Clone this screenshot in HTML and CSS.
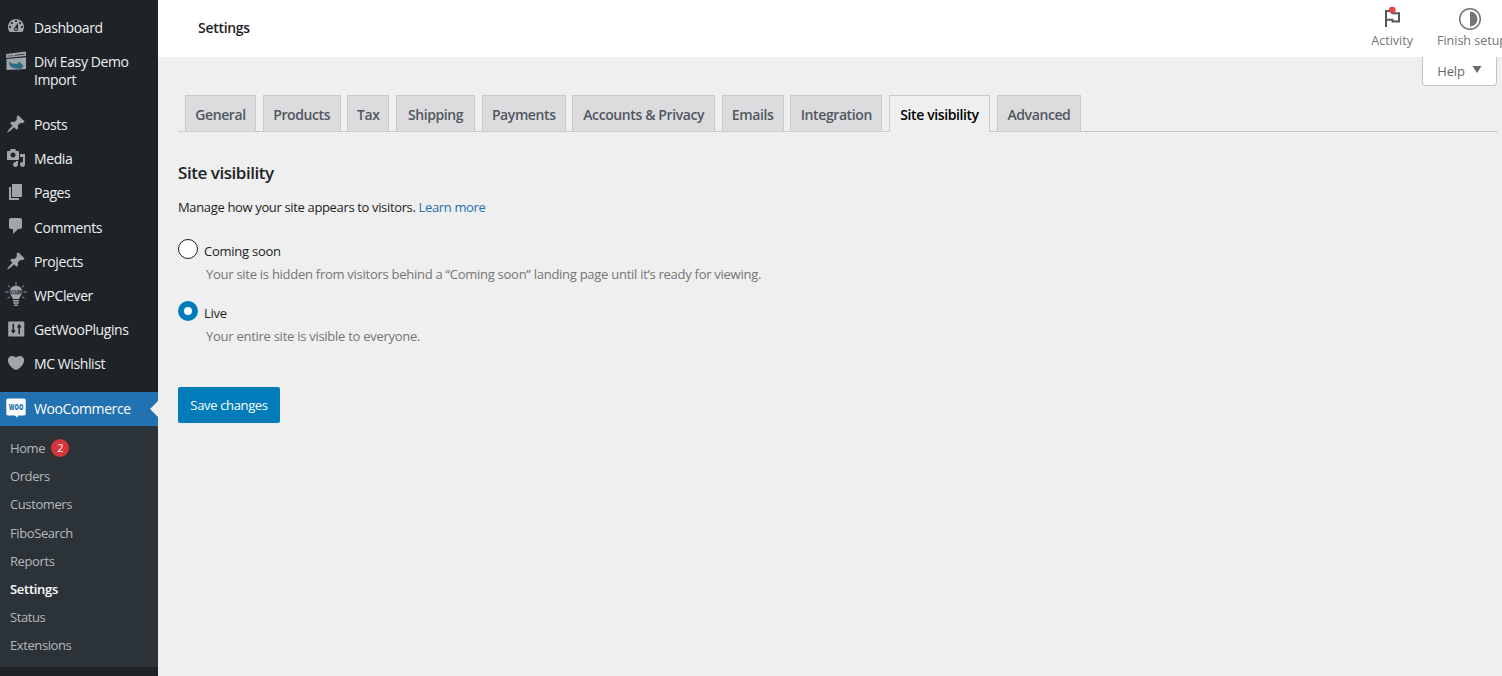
FILE: index.html
```html
<!DOCTYPE html>
<html lang="en">
<head>
  <meta charset="UTF-8">
  <meta name="viewport" content="width=device-width, initial-scale=1.0">
  <title>WooCommerce settings</title>
  <link rel="stylesheet" href="styles.css">
</head>
<body>
  <div class="container">
    <div class="sidebar">
      <ul class="menu">
        <li>
          <svg class="icon" viewBox="0 0 20 20"><path d="M3.76 16h12.48c1.1-1.37 1.76-3.11 1.76-5 0-4.42-3.58-8-8-8s-8 3.58-8 8c0 1.89.66 3.63 1.76 5zM10 4c.55 0 1 .45 1 1s-.45 1-1 1-1-.45-1-1 .45-1 1-1zM6 6c.55 0 1 .45 1 1s-.45 1-1 1-1-.45-1-1 .45-1 1-1zm8 0c.55 0 1 .45 1 1s-.45 1-1 1-1-.45-1-1 .45-1 1-1zm-5.37 5.55L12 7v6c0 1.1-.9 2-2 2s-2-.9-2-2c0-.57.24-1.08.63-1.45zM4 10c.55 0 1 .45 1 1s-.45 1-1 1-1-.45-1-1 .45-1 1-1zm12 0c.55 0 1 .45 1 1s-.45 1-1 1-1-.45-1-1 .45-1 1-1zm-5 3c0-.55-.45-1-1-1s-1 .45-1 1 .45 1 1 1 1-.45 1-1z"/></svg>
          <span>Dashboard</span>
        </li>
        <li>
          <svg class="icon" viewBox="0 0 20 20"><path d="M0 3l20-2.500V5L0 7z"/><path d="M.5 8L20 6.200V18l-19.500 1z"/><path class="hole" d="M1.500 4.600l1-.1v1l-1 .1zM3.600 4.400l1-.1v1l-1 .1zM5.700 4.200l1-.1v1l-1 .1zM8.500 4l10-1.200v.8l-10 1.200z"/><path class="arrow" d="M3 10c.8 2.500 3.500 3.300 9.500 2.500V10l5.300 5-5.300 5v-2.700C7 18 2.500 16 3 10z"/></svg>
          <span>Divi Easy Demo Import</span>
        </li>
        <li class="separator"></li>
        <li>
          <svg class="icon" viewBox="0 0 20 20"><path d="M10.440 3.020l1.820-1.820 6.360 6.350-1.830 1.820c-1.050-.68-2.480-.57-3.410.36l-.75.75c-.92.93-1.040 2.350-.35 3.410l-1.830 1.820-2.410-2.410-2.800 2.790c-.42.42-3.380 2.710-3.800 2.290s1.860-3.390 2.280-3.810l2.790-2.790L4.100 9.360l1.830-1.820c1.050.69 2.480.57 3.400-.36l.75-.75c.93-.92 1.050-2.350.36-3.410z"/></svg>
          <span>Posts</span>
        </li>
        <li>
          <svg class="icon" viewBox="0 0 20 20"><path d="M13 11V4c0-.55-.45-1-1-1h-1.670L9 1H5L3.670 3H2c-.55 0-1 .45-1 1v7c0 .55.45 1 1 1h10c.55 0 1-.45 1-1zM7 4.500c1.380 0 2.500 1.120 2.500 2.500S8.380 9.500 7 9.500 4.500 8.380 4.500 7 5.620 4.500 7 4.500zM14 6h5v10.500c0 1.380-1.120 2.500-2.500 2.500S14 17.880 14 16.500s1.120-2.500 2.500-2.500c.17 0 .34.02.5.05V9h-3V6zm-4 8.050V13h2v3.500c0 1.380-1.120 2.500-2.500 2.500S7 17.880 7 16.500 8.120 14 9.500 14c.17 0 .34.02.5.05z"/></svg>
          <span>Media</span>
        </li>
        <li>
          <svg class="icon" viewBox="0 0 20 20"><path d="M6 15V2h10v13H6zm-1 1h8v2H3V5h2v11z"/></svg>
          <span>Pages</span>
        </li>
        <li>
          <svg class="icon" viewBox="0 0 20 20"><path d="M5 2h9c1.100 0 2 .9 2 2v7c0 1.100-.9 2-2 2h-2l-5 5v-5H5c-1.100 0-2-.9-2-2V4c0-1.100.9-2 2-2z"/></svg>
          <span>Comments</span>
        </li>
        <li>
          <svg class="icon" viewBox="0 0 20 20"><path d="M10.440 3.020l1.820-1.820 6.360 6.350-1.830 1.820c-1.050-.68-2.480-.57-3.410.36l-.75.75c-.92.93-1.040 2.350-.35 3.410l-1.830 1.820-2.410-2.410-2.800 2.790c-.42.42-3.380 2.710-3.800 2.290s1.860-3.390 2.280-3.810l2.790-2.790L4.100 9.360l1.830-1.820c1.050.69 2.480.57 3.400-.36l.75-.75c.93-.92 1.050-2.350.36-3.410z"/></svg>
          <span>Projects</span>
        </li>
        <li>
          <svg class="icon" viewBox="0 0 20 20">
            <path class="ray" d="M10-3v3M1.800 0l2.200 2.700M18.200 0L16 2.700M-1 7h3.500M17.500 7H21M1.500 13.500L4 11.800M18.500 13.500L16 11.800"/>
            <path d="M10 .8c-3.600 0-6.300 2.700-6.300 6 0 3 2.600 4.500 3 7.200h6.600c.4-2.700 3-4.200 3-7.200 0-3.300-2.700-6-6.300-6z"/>
            <path d="M7 15h6v1.500H7zM7.300 17.300h5.400v1.500H7.300zM8.300 19.600h3.400v1.400H8.300z"/>
            <rect class="hole" x="4.500" y="5" width="11" height="4.200"/>
            <text class="bulb-text" x="10" y="8.700">WPC</text>
          </svg>
          <span>WPClever</span>
        </li>
        <li>
          <svg class="icon" viewBox="0 0 20 20"><path d="M3 2.500h14.500a.8.8 0 0 1 .8.8v13.500a.8.8 0 0 1-.8.8H3a.8.8 0 0 1-.8-.8V3.300a.8.8 0 0 1 .8-.8z"/><path class="knob" d="M7.300 4.800v8M13.200 15.300V7"/><path class="hole" d="M4.800 11.200h5L7.300 14.800zM10.700 8.500h5L13.200 4.800z"/></svg>
          <span>GetWooPlugins</span>
        </li>
        <li>
          <svg class="icon" viewBox="0 0 20 20"><path d="M10 17.120c3.330-1.400 5.740-3.790 7.040-6.210 1.280-2.410 1.460-4.810.32-6.250-1.030-1.290-2.370-1.780-3.730-1.740s-2.680.63-3.630 1.460c-.95-.83-2.270-1.420-3.630-1.460s-2.700.45-3.730 1.740c-1.140 1.440-.96 3.840.34 6.250 1.280 2.420 3.690 4.810 7.020 6.210z"/></svg>
          <span>MC Wishlist</span>
        </li>
        <li class="separator"></li>
        <li class="current">
          <svg class="icon" viewBox="0 0 20 20"><path d="M2 .6h16a1.700 1.700 0 0 1 1.700 1.700v13.400a1.700 1.700 0 0 1-1.700 1.700h-5.500L11.300 19.500 8.800 17.400H2A1.700 1.700 0 0 1 .3 15.700V2.300A1.700 1.700 0 0 1 2 .6z"/><text class="woo-text" x="2.800" y="11.500" textLength="14.500" lengthAdjust="spacingAndGlyphs">WOO</text></svg>
          <span>WooCommerce</span>
        </li>
      </ul>
      <ul class="submenu">
        <li>Home <span class="badge">2</span></li>
        <li>Orders</li>
        <li>Customers</li>
        <li>FiboSearch</li>
        <li>Reports</li>
        <li class="active">Settings</li>
        <li>Status</li>
        <li>Extensions</li>
      </ul>
    </div>
    <div class="main-content">
      <div class="header">
        <h1>Settings</h1>
        <div class="activity">
          <button class="panel-tab">
            <svg width="24" height="24" viewBox="0 0 24 24"><path class="flag" d="M6 20V4h6.300v2.300H19v8.200h-6.500v-1.700H6"/><circle class="dot" cx="12.300" cy="3.100" r="3.300"/></svg>
            <span>Activity</span>
          </button>
          <button class="panel-tab setup">
            <svg width="24" height="24" viewBox="0 0 24 24"><circle class="ring" cx="12" cy="12" r="10.300"/><path class="half" d="M12 4.500a7.500 7.500 0 0 1 0 15z"/></svg>
            <span>Finish setup</span>
          </button>
        </div>
      </div>
      <div class="help-row"><button class="help">Help <svg width="10" height="8" viewBox="0 0 10 8"><path d="M.5 0h9L5 7z"/></svg></button></div>
      <div class="tabs">
        <a class="tab general">General</a>
        <a class="tab products">Products</a>
        <a class="tab tax">Tax</a>
        <a class="tab shipping">Shipping</a>
        <a class="tab payments">Payments</a>
        <a class="tab accounts">Accounts &amp; Privacy</a>
        <a class="tab emails">Emails</a>
        <a class="tab integration">Integration</a>
        <a class="tab visibility tab-active">Site visibility</a>
        <a class="tab advanced">Advanced</a>
      </div>
      <form class="settings">
        <h2>Site visibility</h2>
        <p class="intro">Manage how your site appears to visitors. <a>Learn more</a></p>
        <label class="option"><input type="radio" name="visibility"> <span>Coming soon</span></label>
        <p class="hint hint-soon">Your site is hidden from visitors behind a “Coming soon” landing page until it’s ready for viewing.</p>
        <label class="option"><input type="radio" name="visibility" checked> <span>Live</span></label>
        <p class="hint">Your entire site is visible to everyone.</p>
        <button class="save" type="button">Save changes</button>
      </form>
    </div>
  </div>
</body>
</html>
```
FILE: styles.css
```css
* { margin: 0; padding: 0; box-sizing: border-box; }
body { font-family: "Open Sans", "Noto Sans", sans-serif; font-size: 13px; background-color: #efefef; color: #1e1e1e; overflow: hidden; }
ul { list-style: none; }
button { font-family: inherit; border: none; background: none; cursor: pointer; }
.container { display: flex; height: 676px; }

/* sidebar */
.sidebar { width: 158px; background-color: #1d2327; color: #f0f0f1; padding-top: 10px; flex-shrink: 0; }
.menu li { display: flex; height: 34.2px; padding: 8.600px 14px 0 6px; gap: 8px; font-size: 14px; line-height: 18px; letter-spacing: -0.4px; cursor: pointer; }
.menu li:nth-child(2) { height: 52.200px; }
.menu .separator { height: 11px; padding: 0; cursor: default; }
.icon { width: 20px; height: 20px; margin-top: -2.200px; flex-shrink: 0; fill: #a0a5a9; overflow: visible; }
.icon .hole { fill: #1d2327; }
.icon .arrow { fill: #2b6c84; }
.icon .ray { stroke: #8d9296; stroke-width: 1; fill: none; }
.icon .knob { stroke: #1d2327; stroke-width: 1.5; fill: none; }
.bulb-text { font-size: 4.500px; font-weight: 700; text-anchor: middle; letter-spacing: 0; }
.menu .current { position: relative; background-color: #2271b1; color: #fff; }
.menu .current::after { content: ""; position: absolute; right: 0; top: 9px; border: 8px solid transparent; border-right-color: #efefef; border-left: none; }
.current .icon { fill: #fff; }
.current .woo-text { fill: #2271b1; font-size: 8px; font-weight: 800; letter-spacing: 0; }
.submenu { background-color: #2c3338; padding: 8px 10px 7px; height: 241px; }
.submenu li { height: 28.200px; line-height: 28.400px; font-size: 13px; color: #b5b9bd; letter-spacing: -0.4px; }
.submenu .active { color: #fff; font-weight: 600; letter-spacing: -0.3px; }
.badge { display: inline-block; width: 18px; height: 18px; margin-left: 3px; border-radius: 50%; background-color: #d63638; color: #fff; font-size: 11px; line-height: 18px; text-align: center; vertical-align: 1px; }

/* header */
.main-content { flex-grow: 1; min-width: 0; }
.header { height: 57px; background-color: #fff; display: flex; align-items: center; justify-content: space-between; padding-left: 40px; overflow: hidden; }
.header h1 { font-size: 14px; font-weight: 600; letter-spacing: -0.3px; padding-bottom: 2px; }
.activity { display: flex; height: 57px; margin-right: -5px; gap: 24px; }
.panel-tab { display: flex; flex-direction: column; align-items: center; padding-top: 7px; color: #757575; font-size: 12.500px; line-height: 18px; white-space: nowrap; }
.panel-tab svg { margin-bottom: 1px; overflow: visible; }
.setup svg { margin-right: 3px; }
.flag { fill: none; stroke: #50575e; stroke-width: 2; }
.dot { fill: #e04848; }
.ring { fill: none; stroke: #757575; stroke-width: 1.500; }
.half { fill: #757575; }
.help-row { display: flex; justify-content: flex-end; height: 38px; padding-right: 5px; }
.help { width: 75px; height: 29px; background-color: #fff; border: 1px solid #c3c4c7; border-top: none; border-radius: 0 0 4px 4px; color: #646970; font-size: 13px; letter-spacing: -0.2px; display: flex; align-items: center; justify-content: center; gap: 7px; }
.help svg { fill: #646970; margin-top: -2px; }

/* tabs */
.tabs { display: flex; height: 37px; margin: 0 4px 0 20px; padding-left: 7px; gap: 6.700px; border-bottom: 1px solid #c9cacd; }
.tab { height: 36px; border: 1px solid #c9cacd; border-bottom: none; background-color: #dcdcde; color: #50575e; font-size: 14px; font-weight: 600; line-height: 37px; letter-spacing: -0.4px; text-align: center; white-space: nowrap; }
.tab-active { height: 37px; background-color: #efefef; color: #000; }
.general { width: 71px; }
.products { width: 78px; }
.tax { width: 42px; }
.shipping { width: 79px; }
.payments { width: 84px; }
.accounts { width: 142.500px; }
.emails { width: 62px; }
.integration { width: 92px; }
.visibility { width: 101px; }
.advanced { width: 84.500px; }

/* settings form */
.settings { padding: 29px 20px 0; }
.settings h2 { font-size: 17px; font-weight: 600; line-height: 24px; color: #1d2327; letter-spacing: -0.45px; }
.intro { margin-top: 12px; line-height: 20px; letter-spacing: -0.35px; }
.intro a { color: #2271b1; }
.option { display: flex; align-items: center; height: 24px; gap: 6px; margin-top: 20px; letter-spacing: -0.25px; }
.option span { padding-top: 3px; }
.option input { appearance: none; width: 20px; height: 20px; border: 1px solid #1e1e1e; border-radius: 50%; background-color: #fff; }
.option input:checked { border: 6px solid #007cba; }
.hint { margin: 3px 0 0 28px; line-height: 20px; color: #757575; letter-spacing: -0.27px; }
.hint-soon { margin-bottom: -5px; }
.save { display: block; width: 102px; height: 36px; margin-top: 41px; background-color: #007cba; color: #fff; border-radius: 2px; font-size: 13px; letter-spacing: -0.35px; }
```
